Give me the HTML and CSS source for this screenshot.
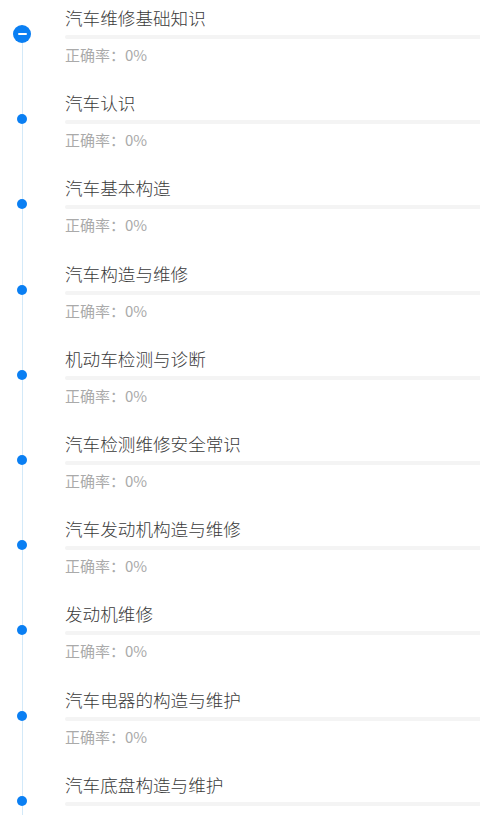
FILE: index.html
```html
<!DOCTYPE html>
<html lang="zh-CN">
<head>
    <meta charset="UTF-8">
    <meta name="viewport" content="width=device-width, initial-scale=1.0">
    <title>章节练习</title>
    <link rel="stylesheet" href="styles.css">
</head>
<body>

<div class="chapter-list">
    <!-- 第一个章节（展开状态） -->
    <div class="chapter first">
        <div class="axis">
            <span class="seg-top"></span>
            <span class="icon-open"><span class="minus"></span></span>
            <span class="seg-bottom"></span>
        </div>
        <div class="info">
            <div class="title">汽车维修基础知识</div>
            <div class="bar"></div>
            <div class="rate">正确率：0%</div>
        </div>
    </div>

    <div class="chapter">
        <div class="axis"><span class="seg-top"></span><span class="dot"></span><span class="seg-bottom"></span></div>
        <div class="info">
            <div class="title">汽车认识</div>
            <div class="bar"></div>
            <div class="rate">正确率：0%</div>
        </div>
    </div>

    <div class="chapter">
        <div class="axis"><span class="seg-top"></span><span class="dot"></span><span class="seg-bottom"></span></div>
        <div class="info">
            <div class="title">汽车基本构造</div>
            <div class="bar"></div>
            <div class="rate">正确率：0%</div>
        </div>
    </div>

    <div class="chapter">
        <div class="axis"><span class="seg-top"></span><span class="dot"></span><span class="seg-bottom"></span></div>
        <div class="info">
            <div class="title">汽车构造与维修</div>
            <div class="bar"></div>
            <div class="rate">正确率：0%</div>
        </div>
    </div>

    <div class="chapter">
        <div class="axis"><span class="seg-top"></span><span class="dot"></span><span class="seg-bottom"></span></div>
        <div class="info">
            <div class="title">机动车检测与诊断</div>
            <div class="bar"></div>
            <div class="rate">正确率：0%</div>
        </div>
    </div>

    <div class="chapter">
        <div class="axis"><span class="seg-top"></span><span class="dot"></span><span class="seg-bottom"></span></div>
        <div class="info">
            <div class="title">汽车检测维修安全常识</div>
            <div class="bar"></div>
            <div class="rate">正确率：0%</div>
        </div>
    </div>

    <div class="chapter">
        <div class="axis"><span class="seg-top"></span><span class="dot"></span><span class="seg-bottom"></span></div>
        <div class="info">
            <div class="title">汽车发动机构造与维修</div>
            <div class="bar"></div>
            <div class="rate">正确率：0%</div>
        </div>
    </div>

    <div class="chapter">
        <div class="axis"><span class="seg-top"></span><span class="dot"></span><span class="seg-bottom"></span></div>
        <div class="info">
            <div class="title">发动机维修</div>
            <div class="bar"></div>
            <div class="rate">正确率：0%</div>
        </div>
    </div>

    <div class="chapter">
        <div class="axis"><span class="seg-top"></span><span class="dot"></span><span class="seg-bottom"></span></div>
        <div class="info">
            <div class="title">汽车电器的构造与维护</div>
            <div class="bar"></div>
            <div class="rate">正确率：0%</div>
        </div>
    </div>

    <div class="chapter">
        <div class="axis"><span class="seg-top"></span><span class="dot"></span><span class="seg-bottom"></span></div>
        <div class="info">
            <div class="title">汽车底盘构造与维护</div>
            <div class="bar"></div>
        </div>
    </div>
</div>

</body>
</html>
```

FILE: styles.css
```css
/* Grundlayout */
body {
    margin: 0;
    padding: 0;
    background-color: #fff;
    font-family: "Noto Sans CJK SC", "Noto Sans", sans-serif;
    color: #333;
}

.chapter-list {
    display: flex;
    flex-direction: column;
}

.chapter {
    display: flex;
    height: 85.2px;
}

/* Zeitachse links */
.axis {
    width: 65px;
    flex-shrink: 0;
    display: flex;
    flex-direction: column;
    align-items: flex-start;
    padding-left: 17px;
    box-sizing: border-box;
}

.seg-top,
.seg-bottom {
    display: block;
    width: 1px;
    margin-left: 5px;
    background-color: #d3e9f8;
}

.seg-top {
    height: 29px;
}

.seg-bottom {
    flex: 1;
}

.dot {
    display: block;
    width: 10px;
    height: 10px;
    border-radius: 50%;
    background-color: #0a7ff3;
}

.first .seg-top {
    height: 25px;
    background-color: transparent;
}

.icon-open {
    display: flex;
    align-items: center;
    justify-content: center;
    width: 18px;
    height: 18px;
    margin-left: -4px;
    border-radius: 50%;
    background-color: #0a7ff3;
}

.minus {
    display: block;
    width: 9px;
    height: 2px;
    border-radius: 1px;
    background-color: #fff;
}

/* Inhalt rechts */
.info {
    flex: 1;
    padding-top: 5px;
}

.title {
    font-size: 17.6px;
    font-weight: 300;
    line-height: 25px;
    color: #3a3a3a;
}

.bar {
    height: 4px;
    margin-top: 5px;
    background-color: #f4f4f4;
    border-radius: 2px 0 0 2px;
}

.rate {
    margin-top: 5px;
    font-size: 15px;
    line-height: 22px;
    color: #aaa;
}
```
